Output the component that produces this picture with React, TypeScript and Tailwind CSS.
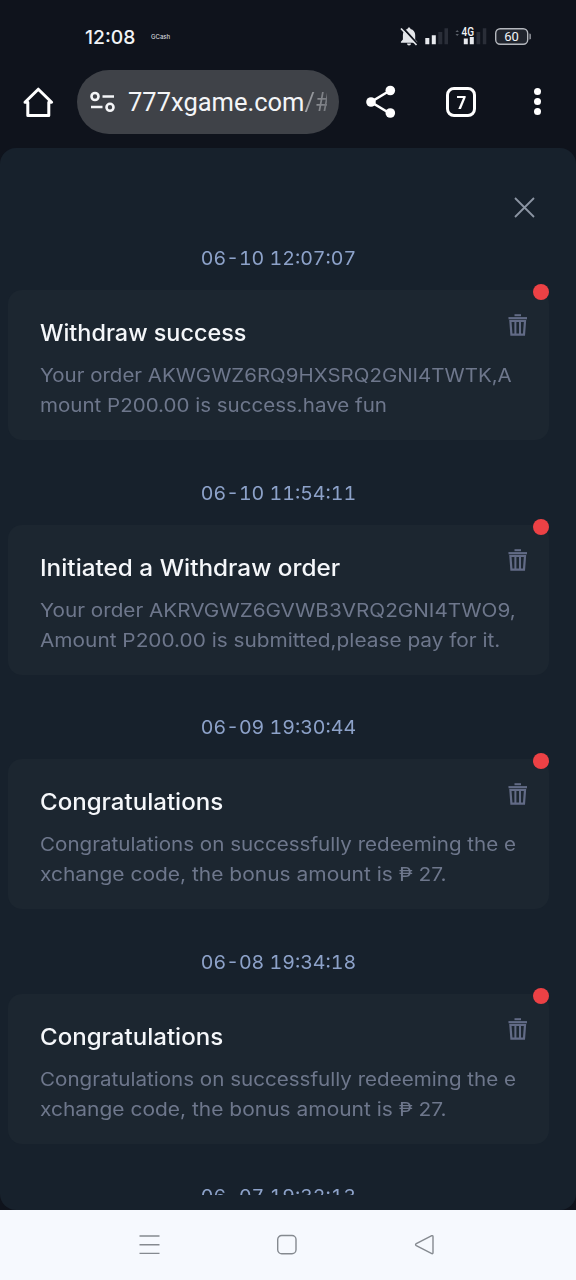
import React from 'react';

type Line = { text: string; className: string };

type Message = {
  id: number;
  date: string;
  title: string;
  titleClass: string;
  lines: Line[];
};

const bonusLines: Line[] = [
  { text: 'Congratulations on successfully redeeming the e', className: 'scale-x-[1.113]' },
  { text: 'xchange code, the bonus amount is ₱ 27.', className: 'scale-x-[1.133]' },
];

const messages: Message[] = [
  {
    id: 1,
    date: '06-10 12:07:07',
    title: 'Withdraw success',
    titleClass: 'scale-x-[1.04]',
    lines: [
      { text: 'Your order AKWGWZ6RQ9HXSRQ2GNI4TWTK,A', className: 'scale-x-[1.107]' },
      { text: 'mount P200.00 is success.have fun', className: 'scale-x-[1.11]' },
    ],
  },
  {
    id: 2,
    date: '06-10 11:54:11',
    title: 'Initiated a Withdraw order',
    titleClass: 'scale-x-[1.08]',
    lines: [
      { text: 'Your order AKRVGWZ6GVWB3VRQ2GNI4TWO9,', className: 'scale-x-[1.12]' },
      { text: 'Amount P200.00 is submitted,please pay for it.', className: 'scale-x-[1.125]' },
    ],
  },
  { id: 3, date: '06-09 19:30:44', title: 'Congratulations', titleClass: 'scale-x-[1.07]', lines: bonusLines },
  { id: 4, date: '06-08 19:34:18', title: 'Congratulations', titleClass: 'scale-x-[1.07]', lines: bonusLines },
];

const TrashIcon = () => (
  <svg width="20" height="22" viewBox="0 0 20 22" fill="none" stroke="#626b86">
    <path d="M6.500 1.200h6.500" strokeWidth="2" />
    <path d="M0.500 4.200h18.500" strokeWidth="2.200" />
    <path d="M2.400 7h14.600l-1 13.600H3.400z" strokeWidth="2.200" />
    <path d="M7.400 7v13.500M12 7v13.500" strokeWidth="2" />
  </svg>
);

const StatusBar = () => (
  <div className="flex h-[70px] shrink-0 items-start pt-[25px] pl-[85px]">
    <div className="w-[65px] text-[19.300px] leading-6 font-medium text-[#f1f3f6]">12:08</div>
    <div className="w-[249px] pl-px text-[6px] leading-6 font-medium text-[#d5d8de]">GCash</div>
    <svg width="134" height="24" viewBox="399 25 134 24">
      <path d="M409 27.500c-.9 0-1.500.6-1.500 1.500-3 .7-4.600 3-4.600 6v4.600l-2 2.200v.9h16.300v-.9l-2-2.200V35c0-3-1.700-5.300-4.700-6 0-.9-.6-1.500-1.500-1.500zM407 43.500a2 2 0 0 0 4 0z" fill="#e4e6ea" />
      <path d="M402.500 27.500l15 16.500" stroke="#0f131c" strokeWidth="2" />
      <path d="M401 28.500l15.500 16.500" stroke="#e4e6ea" strokeWidth="1.700" />
      <path d="M425.300 38h4v6.200h-4zM431.800 35.200h4v9h-4z" fill="#e8eaee" />
      <path d="M438.300 32h4v12.200h-4zM444.500 28.200h3.500v16h-3.500z" fill="#2a2e38" />
      <path d="M455.500 32l1.700-2 1.700 2zM455.500 34l1.700 2 1.700-2z" fill="#5b606a" />
      <text x="461.500" y="36" fontFamily="Roboto, sans-serif" fontSize="12.500" fontWeight="500" fill="#f1f3f6" textLength="12.500" lengthAdjust="spacingAndGlyphs">4G</text>
      <path d="M463.800 38.500h4v5.700h-4zM469.800 37h4v7.200h-4z" fill="#e8eaee" />
      <path d="M476.500 32h3.700v12.200h-3.700zM482.800 28.200h3.500v16h-3.500z" fill="#2a2e38" />
      <rect x="495.700" y="28.700" width="32" height="15.500" rx="4.500" fill="#20242d" stroke="#b4b7bd" strokeWidth="1.400" />
      <path d="M529.500 33.500q1.200 0 1.200 1.200v3.600q0 1.200-1.200 1.200z" fill="#b4b7bd" />
      <text x="511.500" y="41" textAnchor="middle" fontFamily="Roboto, sans-serif" fontSize="13" fill="#f1f3f6">60</text>
    </svg>
  </div>
);

const BrowserBar = () => (
  <div className="flex h-16 shrink-0 items-center">
    <svg className="ml-[22px]" width="32" height="34" viewBox="22 85 32 34" fill="none" stroke="#fff" strokeWidth="3" strokeLinejoin="round">
      <path d="M25 102.300L38.300 89.200l13.300 13.100h-2.800v13.200H27.800v-13.200z" />
    </svg>
    <div className="ml-[23px] flex h-16 w-[262px] items-center rounded-full bg-[#3f4248] pl-3">
      <svg width="28" height="24" viewBox="89 90 28 24" fill="none" stroke="#f4f5f7" strokeWidth="2.600">
        <circle cx="95" cy="96.500" r="3.500" />
        <path d="M102.500 96.500h11.500M91 107h11.500" />
        <circle cx="110" cy="107.300" r="3.500" />
      </svg>
      <div className="ml-[11px] w-[199px] overflow-hidden font-[family-name:Roboto] text-[25.500px] leading-8 whitespace-nowrap text-[#f4f5f7]">
        777xgame.com<span className="bg-linear-to-r from-[#a6a8ac] to-[#6d7076] bg-clip-text text-transparent">/#</span>
      </div>
    </div>
    <svg className="ml-[25px]" width="34" height="36" viewBox="364 84 34 36" fill="#fff">
      <path d="M390 90.500L371 102l19 11.500" fill="none" stroke="#fff" strokeWidth="2.600" />
      <circle cx="390.300" cy="90.500" r="4.800" />
      <circle cx="371" cy="102" r="4.800" />
      <circle cx="390.300" cy="113" r="4.800" />
    </svg>
    <div className="ml-[48px] flex size-[30px] items-center justify-center rounded-[8px] border-[3px] border-white font-[family-name:Roboto] text-[19px] leading-none font-bold text-white">
      <span className="scale-x-90">7</span>
    </div>
    <div className="mb-px ml-[58px] flex flex-col gap-[3px]">
      <span className="size-[7px] rounded-full bg-white" />
      <span className="size-[7px] rounded-full bg-white" />
      <span className="size-[7px] rounded-full bg-white" />
    </div>
  </div>
);

const DateLabel = ({ children }: { children: React.ReactNode }) => (
  <div className="h-[30px] scale-x-[1.03] pt-px text-center text-[19px] leading-[30px] tabular-nums text-[#8da2c9]">{children}</div>
);

const MessageCard = ({ message }: { message: Message }) => (
  <div className="relative mt-[17px] mb-[37.500px] h-[150px] rounded-[14px] bg-[#1c2630] pt-[27px] pl-8">
    <span className="absolute -top-[6px] right-0 size-4 rounded-full bg-[#ec4145]" />
    <button className="absolute top-[24px] right-[21px]">
      <TrashIcon />
    </button>
    <h2 className={`origin-left text-[22.500px] leading-8 font-medium whitespace-nowrap text-[#f5f7fa] ${message.titleClass}`}>{message.title}</h2>
    <div className="mt-[11px] text-[18.500px] leading-[30px] whitespace-nowrap text-[#6e778c]">
      {message.lines.map((line) => (
        <p key={line.text} className={`origin-left ${line.className}`}>{line.text}</p>
      ))}
    </div>
  </div>
);

const NavBar = () => (
  <div className="flex h-[70px] shrink-0 items-center bg-[#f6f9fe] pl-[138px]">
    <svg width="22" height="22" viewBox="0 0 22 22" stroke="#858a90" strokeWidth="1.400">
      <path d="M1.500 2h20M1.500 10.700h20M1.500 19.400h20" />
    </svg>
    <svg className="ml-[116px]" width="22" height="22" viewBox="0 0 22 22" fill="none" stroke="#858a90" strokeWidth="1.400">
      <rect x="1.700" y="1.500" width="18.300" height="18.300" rx="4" />
    </svg>
    <svg className="ml-[116px]" width="22" height="22" viewBox="0 0 22 22" fill="none" stroke="#858a90" strokeWidth="1.400">
      <path d="M17.800 1.700L2.300 9.700q-1.500.9 0 1.900l15.500 8q1.200.4 1.200-1V2.700q0-1.400-1.200-1z" />
    </svg>
  </div>
);

const App: React.FC = () => {
  return (
    <div className="flex h-[1280px] w-[576px] flex-col overflow-hidden bg-[#0f131c] font-[Inter,sans-serif]">
      <StatusBar />
      <BrowserBar />
      <div className="mt-[14px] flex h-[1062px] shrink-0 flex-col overflow-hidden rounded-[16px] bg-[#17212c]">
        <div className="flex h-[95px] shrink-0 items-start justify-end pt-[49px] pr-[41px]">
          <svg width="21" height="21" viewBox="0 0 21 21" stroke="#8b95a3" strokeWidth="1.800">
            <path d="M1 1l19 19M20 1L1 20" />
          </svg>
        </div>
        <div className="ml-2 h-[952px] w-[541px] shrink-0 overflow-hidden">
          {messages.map((message) => (
            <React.Fragment key={message.id}>
              <DateLabel>{message.date}</DateLabel>
              <MessageCard message={message} />
            </React.Fragment>
          ))}
          <DateLabel>06-07 19:32:13</DateLabel>
        </div>
      </div>
      <NavBar />
    </div>
  );
};

export default App;
